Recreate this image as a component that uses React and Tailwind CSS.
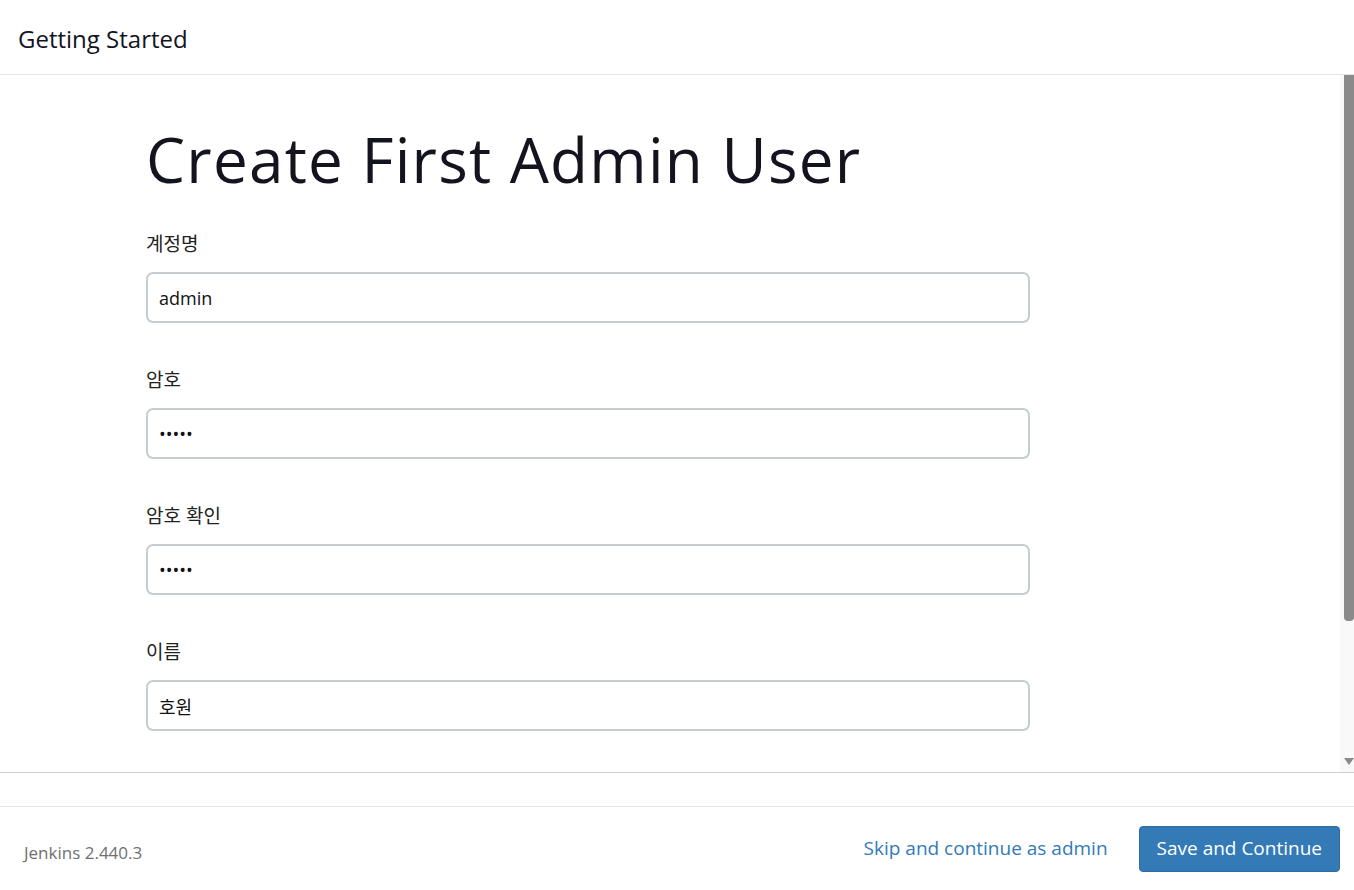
import React from 'react';

const fields = [
  { label: '계정명', value: 'admin', type: 'text' },
  { label: '암호', value: '12345', type: 'password' },
  { label: '암호 확인', value: '12345', type: 'password' },
  { label: '이름', value: '호원', type: 'text' },
];

const font = { fontFamily: '"Open Sans", "Noto Sans CJK KR", sans-serif' };

export default function App() {
  return (
    <div className="w-[1354px] h-[890px] flex flex-col bg-white text-[#333]" style={font}>
      <header className="h-[75px] shrink-0 border-b border-[#e5e5e5] flex items-center px-[18px]">
        <h2 className="text-[24px] text-[#14141f] mt-[3px]">Getting Started</h2>
      </header>

      <div className="h-[698px] shrink-0 flex border-b border-[#d0d0d0]">
        <main className="flex-1 overflow-hidden pl-[146px] pt-[44px]">
          <h1 className="text-[62px] font-normal leading-[80px] text-[#14141f] tracking-[1.25px]">
            Create First Admin User
          </h1>
          <div className="w-[884px] mt-[33px] flex flex-col">
            {fields.map((f) => (
              <div key={f.label} className="flex flex-col mb-[45px]">
                <label className="text-[19px] leading-[24px] text-[#222] mb-[16px]">{f.label}</label>
                <input
                  type={f.type}
                  defaultValue={f.value}
                  readOnly
                  className="h-[51px] w-full border-2 border-[#c4cdd2] rounded-[7px] px-[11px] text-[18px] text-[#111] outline-none"
                  style={font}
                />
              </div>
            ))}
          </div>
        </main>
        <div className="w-[14px] shrink-0 bg-[#f9f9f9] flex flex-col items-end">
          <div className="w-[10px] h-[546px] bg-[#8a8a8a] rounded-b-[4px]" />
          <div className="flex-1" />
          <svg width="10" height="8" viewBox="0 0 10 8" className="mb-[6px]">
            <path d="M0 0 L10 0 L5 7 Z" fill="#8a8a8a" />
          </svg>
        </div>
      </div>

      <div className="h-[34px] shrink-0 border-b border-[#e5e5e5]" />

      <footer className="flex-1 flex items-center justify-between pl-[24px] pr-[14px]">
        <span className="text-[17px] text-[#6f6f6f] mt-[8px]">Jenkins 2.440.3</span>
        <div className="flex items-center gap-[31px]">
          <a href="#" className="text-[19px] text-[#337ab7]">Skip and continue as admin</a>
          <button className="h-[46px] px-[17px] rounded-[4px] bg-[#337ab7] text-white text-[19px] border border-[#2e6da4]">
            Save and Continue
          </button>
        </div>
      </footer>
    </div>
  );
}
